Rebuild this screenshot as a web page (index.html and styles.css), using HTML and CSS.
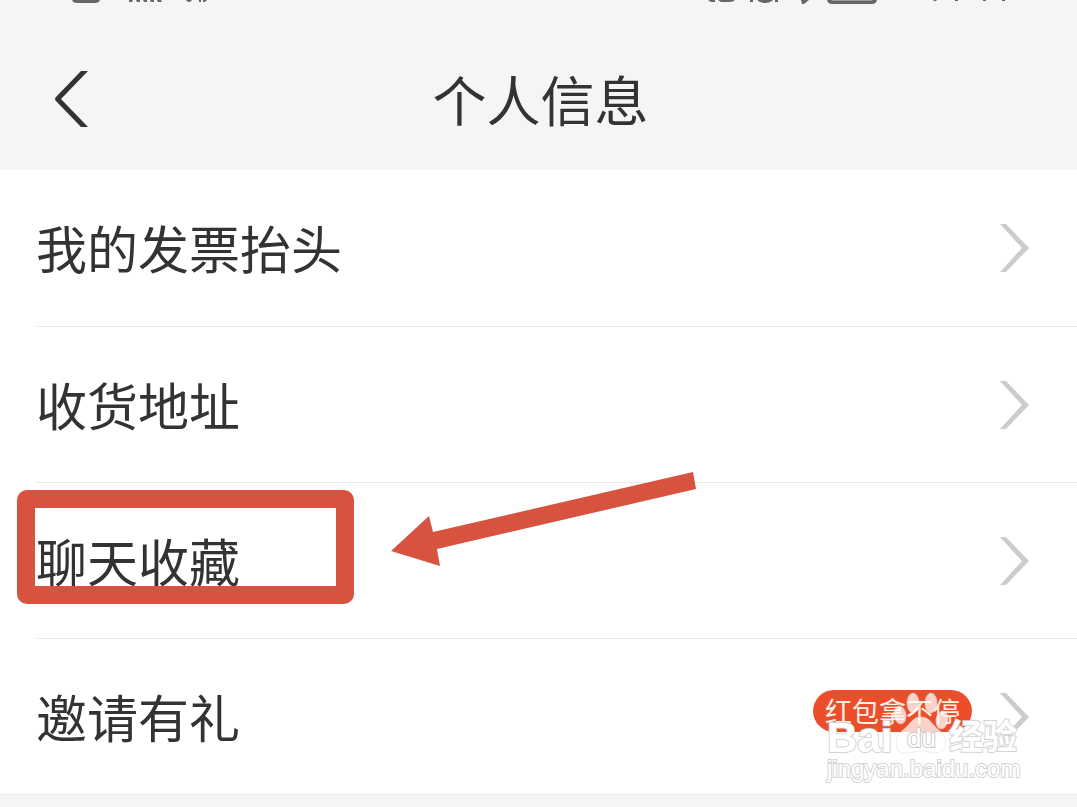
FILE: index.html
```html
<!DOCTYPE html>
<html lang="zh-CN">
<head>
    <meta charset="UTF-8">
    <meta name="viewport" content="width=device-width, initial-scale=1">
    <title>个人信息</title>
    <link rel="stylesheet" href="styles.css">
</head>
<body>
    <!-- Status bar, mostly scrolled off the top -->
    <div class="status-bar">
        <svg width="150" height="6" viewBox="0 0 150 6" fill="#666">
            <path d="M2 0H30Q29 3 25 3H7Q3 3 2 0Z"/>
            <path d="M59 0h4l-1 2h-3zM66 0h4v2h-3zM73 0h4v2h-3zM80 0h4v2h-3zM87 0h4l1 2h-4z"/>
            <path d="M116 0h6q-1 2-3 2t-3-2zM129 0h2v2h-2zM133 0h4l-2 2h-2z"/>
        </svg>
        <svg width="310" height="6" viewBox="0 0 310 6" fill="#666">
            <path d="M8 0h7v2h-4zM18 0h17q-2 2-5 2h-9zM50 0h3v2h-3zM57 0h16q-3 3-8 3t-8-3zM75 0h3v2h-3zM101 0h8l-5 4h-2z"/>
            <path d="M127 0H177Q176 4 172 4H132Q128 4 127 0Z"/>
            <path d="M131 0H173L171 1H133Z" fill="#999"/>
            <path d="M234 0h3l-1 1h-3zM255 0h3v1h-3zM283 0h3v1h-3zM302 0h3v1h-3z"/>
        </svg>
    </div>

    <header class="header">
        <button class="back" type="button" aria-label="返回">
            <svg width="34" height="58" viewBox="0 0 34 58">
                <path d="M27 1H34L7 29L34 57H27L2 31Q0 29 2 27Z" fill="#333"/>
            </svg>
        </button>
        <h1 class="title">个人信息</h1>
    </header>

    <nav class="list">
        <a class="row" href="#invoice">
            <span class="label">我的发票抬头</span>
            <svg class="arrow" width="30" height="48" viewBox="0 0 30 48"><path d="M1 0H7L30 24L7 48H1L23 24Z"/></svg>
        </a>
        <a class="row" href="#address">
            <span class="label">收货地址</span>
            <svg class="arrow" width="30" height="48" viewBox="0 0 30 48"><path d="M1 0H7L30 24L7 48H1L23 24Z"/></svg>
        </a>
        <a class="row" href="#favorites">
            <span class="label">聊天收藏</span>
            <svg class="arrow" width="30" height="48" viewBox="0 0 30 48"><path d="M1 0H7L30 24L7 48H1L23 24Z"/></svg>
            <span class="mark-box"></span>
            <svg class="mark-arrow" width="306" height="96" viewBox="0 0 306 96">
                <path d="M0 79L38 44L42 60L302 0L305 17L46 77L49 94Z" fill="#d75340"/>
            </svg>
        </a>
        <a class="row" href="#invite">
            <span class="label">邀请有礼</span>
            <span class="badge">红包拿不停</span>
            <svg class="arrow" width="30" height="48" viewBox="0 0 30 48"><path d="M1 0H7L30 24L7 48H1L23 24Z"/></svg>
            <!-- Watermark -->
            <svg class="watermark" width="200" height="96" viewBox="0 0 200 96">
                <g class="paw">
                    <ellipse cx="90" cy="14" rx="6" ry="10"/>
                    <ellipse cx="108" cy="14" rx="6" ry="10"/>
                    <ellipse cx="77" cy="26" rx="6" ry="9" transform="rotate(-10 77 26)"/>
                    <ellipse cx="119" cy="31" rx="6" ry="9" transform="rotate(10 119 31)"/>
                    <path d="M98 28C89 28 87 36 80 41C72 47 70 62 80 64C87 65 91 62 98 62C105 62 110 65 117 63C125 60 124 48 117 42C109 36 107 28 98 28Z"/>
                </g>
                <text class="brand" x="4" y="63">Bai</text>
                <text class="du" x="84" y="58">du</text>
                <text class="cn" x="126" y="60">经验</text>
                <text class="site" x="4" y="88">jingyan.baidu.com</text>
            </svg>
        </a>
    </nav>
</body>
</html>
```

FILE: styles.css
```css
* {
    box-sizing: border-box;
}
body {
    margin: 0;
    min-height: 100vh;
    background-color: #f5f5f5;
    color: #333;
    font-family: "Noto Sans CJK SC", sans-serif;
}
.status-bar {
    display: flex;
    justify-content: space-between;
    height: 30px;
    padding: 0 67px 0 70px;
}
.header {
    display: grid;
    grid-template-columns: 1fr auto 1fr;
    align-items: center;
    height: 140px;
    padding: 0 50px 3px 54px;
}
.back {
    display: flex;
    justify-self: start;
    padding: 0;
    border: none;
    background: none;
    cursor: pointer;
}
.title {
    margin: 0;
    font-size: 54px;
    font-weight: 400;
    line-height: 80px;
}
.list {
    background-color: #fff;
    border-bottom: 1px solid #ececec;
}
.row {
    position: relative;
    display: flex;
    align-items: center;
    height: 156px;
    padding-right: 48px;
    margin-left: 36px;
    color: #333;
    text-decoration: none;
}
.row + .row {
    border-top: 1px solid #ececec;
}
.label {
    flex: 1;
    padding-bottom: 2px;
    font-size: 51px;
    line-height: 76px;
}
.arrow {
    fill: #ccc;
}
.badge {
    height: 42px;
    margin: 0 27px 12px 0;
    padding: 0 12px;
    border-radius: 21px;
    background-color: #ec4e2c;
    color: #fff0e4;
    font-size: 27px;
    line-height: 42px;
}
/* Red highlight round the favourites entry */
.mark-box {
    position: absolute;
    top: 7px;
    left: -19px;
    width: 337px;
    height: 114px;
    border: 18px solid #d75340;
    border-radius: 10px;
}
.mark-arrow {
    position: absolute;
    top: -11px;
    left: 355px;
}
.watermark {
    position: absolute;
    top: 50px;
    right: 54px;
    font-family: "Liberation Sans", "Noto Sans CJK SC", sans-serif;
}
.watermark text {
    fill: #fff;
    stroke: #d4d4d4;
    stroke-width: 2px;
    paint-order: stroke;
}
.paw {
    fill: #fff;
    fill-opacity: 0.75;
    stroke: #ddd;
    stroke-opacity: 0.5;
}
.watermark .brand {
    font-size: 42px;
    font-weight: 700;
}
.watermark .du {
    font-size: 26px;
    stroke: #c8c8c8;
}
.watermark .cn {
    font-size: 34px;
    font-weight: 700;
}
.watermark .site {
    font-size: 24px;
}
```
